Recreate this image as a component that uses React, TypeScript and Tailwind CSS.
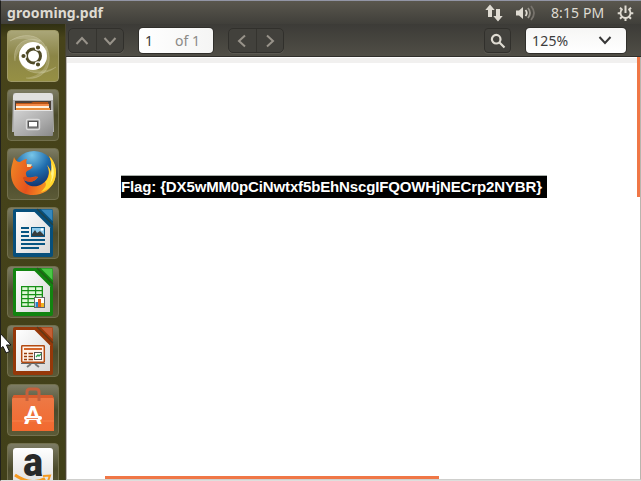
import type { ReactNode } from "react";

const UI = "font-['Noto_Sans','Open_Sans',sans-serif]";

function Tile({ children, active = false }: { children: ReactNode; active?: boolean }) {
  return (
    <div
      className={`h-[52px] w-[52px] shrink-0 overflow-hidden rounded-[4px] border ${
        active
          ? "border-[#a09b68] bg-linear-to-b from-[#aaa678] via-[#8b8546] to-[#969044]"
          : "border-[#72704e] bg-linear-to-b from-[#7d7c64] via-[#4b4a2b] to-[#5b5a37]"
      }`}
    >
      <svg viewBox="0 0 52 52" className="-m-px block h-[52px] w-[52px]">
        {children}
      </svg>
    </div>
  );
}

function Ubuntu() {
  return (
    <Tile active>
      <g fill="#e2e0c4" fillOpacity=".25">
        <path d="M3 11C18 1 37 5 40 22L36 18C31 8 15 7 3 11Z" />
        <path d="M8 31C5 15 18 5 34 11L30 14C19 9 12 17 8 31Z" />
        <path d="M19 48C37 51 48 34 39 16L37 22C44 35 34 46 19 48Z" />
        <path d="M49 37C33 49 13 42 12 26L15 29C20 40 34 44 49 37Z" />
      </g>
      <g fill="none" stroke="#e0dec0" strokeOpacity=".3">
        <path d="M3 11C18 1 37 5 40 22M8 31C5 15 18 5 34 11M19 48C37 51 48 34 39 16M49 37C33 49 13 42 12 26" />
      </g>
      <circle cx="26" cy="26" r="14" fill="#fff" />
      <circle cx="26.5" cy="26" r="7" fill="none" stroke="#4f4a27" strokeWidth="3" />
      <g fill="#4f4a27" stroke="#fff" strokeWidth="1.2">
        <circle cx="16.5" cy="26" r="2.7" />
        <circle cx="31" cy="17.5" r="2.7" />
        <circle cx="31" cy="34.5" r="2.7" />
      </g>
    </Tile>
  );
}

function Files() {
  return (
    <Tile>
      <defs>
        <linearGradient id="cab" x2="1" y2="1">
          <stop stopColor="#d2d2d2" /><stop offset=".6" stopColor="#aaa" /><stop offset="1" stopColor="#898989" />
        </linearGradient>
      </defs>
      <path d="M6 6Q6 4 8 4H44Q46 4 46 6L47 43H5Z" fill="#b2b2b2" />
      <path d="M6 7Q7 4 9 4H43Q45 4 46 7V11H6Z" fill="#e0e0e0" />
      <path d="M8 12H44V23H8Z" fill="#4b4038" />
      <path d="M9 14H24L26 13H41L42 16V23H9Z" fill="#b75416" />
      <path d="M9 15H42V17H9Z" fill="#f48a48" />
      <path d="M9 17H42V19H9Z" fill="#fff0dc" />
      <path d="M9 19H43V22H9Z" fill="#ea8b35" />
      <rect x="7" y="21" width="39" height="26" rx="1" fill="url(#cab)" />
      <path d="M7 21.5H45.5" stroke="#e5e5e5" />
      <rect x="19.5" y="30.5" width="13" height="10" rx="1.5" fill="#8a8a8a" stroke="#dcdcdc" strokeWidth="1.4" />
      <rect x="21.5" y="32.5" width="9" height="5.5" fill="#fff" stroke="#555" />
    </Tile>
  );
}

function Firefox() {
  return (
    <Tile>
      <defs>
        <radialGradient id="globe" cx=".45" cy=".1" r=".8">
          <stop stopColor="#78c6e8" /><stop offset=".5" stopColor="#1f6cad" /><stop offset="1" stopColor="#112e66" />
        </radialGradient>
        <linearGradient id="fox" x1="0" y1="0" x2="1" y2=".3">
          <stop stopColor="#f08a25" /><stop offset=".55" stopColor="#e5531d" /><stop offset="1" stopColor="#f9a024" />
        </linearGradient>
      </defs>
      <circle cx="27" cy="24" r="21" fill="url(#globe)" />
      <path d="M7 9C8 12 10 14 13 14C16 12 18 11 20 11C19 13 19 15 20 17L26 18.5C25 21 22 22 20 23C18 25 19 27 20 29C24 31 27 27 31 29C28 34 22 35 17 32C20 39 29 40 35 36C43 31 43 22 40 17C43 20 44 24 44 26C45 21 45 14 42 8C48 14 50 22 48 31C44 42 36 47 26 47C12 47 4 37 4 25C4 18 6 15 7 9Z" fill="url(#fox)" />
      <path d="M42 8C50 15 51 27 46 36C42 41 38 43 34 44C39 39 40 36 38 34C43 30 43 22 40 17C43 20 44 24 44 26C45 20 45 13 42 8Z" fill="#ffd62c" />
      <path d="M44 14C48 22 48 28 43 36C45 30 45 28 44 26C45 21 45 17 44 14Z" fill="#fff38a" />
      <path d="M20 16L25 16.5 23.5 19 20 19Z" fill="#ffe2a8" />
      <path d="M17 32C22 35 28 34 31 29C28 28 24 31 20 29C16 28 15 30 17 32Z" fill="#d34b1b" />
    </Tile>
  );
}

function Doc({ color, light, id, children }: { color: string; light: string; id: string; children: ReactNode }) {
  return (
    <Tile>
      <defs>
        <linearGradient id={id} x2="1" y2="1">
          <stop stopColor="#fff" /><stop offset="1" stopColor="#d8d8d8" />
        </linearGradient>
      </defs>
      <path d="M8 2H44Q46 2 46 4V48Q46 50 44 50H8Q6 50 6 48V4Q6 2 8 2Z" fill={color} />
      <path d="M30 2L46 18" stroke="#343820" strokeOpacity=".55" strokeWidth="1.2" />
      <path d="M34 2.5H44.5L45.5 3.5V14Z" fill={light} />
      <path d="M9 5H27.5L43 20.5V46H9Z" fill={`url(#${id})`} />
      {children}
    </Tile>
  );
}

function Writer() {
  return (
    <Doc color="#074f7b" light="#3688bd" id="writerPage">
      <path d="M14 21H22M14 25H22M14 29H22M14 33H38M14 37H38M14 41H32" stroke="#075582" strokeWidth="1.8" />
      <rect x="24.5" y="20.5" width="13" height="9" fill="#91ccec" stroke="#075582" />
      <path d="M25 29V27L28 23 30 26 33 24 37 28V29Z" fill="#383d3d" />
      <circle cx="35" cy="22.5" r="1.3" fill="#fff" />
    </Doc>
  );
}

function Calc() {
  return (
    <Doc color="#128410" light="#4bc746" id="calcPage">
      <rect x="14" y="20" width="22" height="21" fill="#169016" />
      <path d="M15.2 21.2h5.3v2.8h-5.3zM21.7 21.2h6.3v2.8h-6.3zM29.2 21.2h5.5v2.8h-5.5zM15.2 25.2h5.3v2.8h-5.3zM21.7 25.2h6.3v2.8h-6.3zM29.2 25.2h5.5v2.8h-5.5zM15.2 29.2h5.3v2.8h-5.3zM21.7 29.2h6.3v2.8h-6.3zM29.2 29.2h5.5v2.8h-5.5zM15.2 33.2h5.3v2.8h-5.3zM21.7 33.2h6.3v2.8h-6.3zM15.2 37.2h5.3v2.5h-5.3zM21.7 37.2h6.3v2.5h-6.3z" fill="#dff8d8" />
      <rect x="27.5" y="31.5" width="10" height="10" fill="#fff" stroke="#666" />
      <path d="M28.5 36h2.5v5h-2.5z" fill="#2784c7" />
      <path d="M31 33h3v8h-3z" fill="#e45d18" />
      <path d="M34 37h3v4h-3z" fill="#f1b522" />
    </Doc>
  );
}

function Impress() {
  return (
    <Doc color="#953809" light="#c45f35" id="impressPage">
      <rect x="14.7" y="20.7" width="22.6" height="16.6" rx=".7" fill="#fff3e9" stroke="#b34a12" strokeWidth="1.5" />
      <path d="M17 24H35" stroke="#d56428" strokeWidth="2" />
      <path d="M17 28.5H20M21.5 28.5H26M17 31.5H20M21.5 31.5H26M17 34.5H20M21.5 34.5H26" stroke="#963b0a" strokeWidth="1.5" />
      <rect x="27.5" y="27.5" width="7" height="7" fill="#fff" stroke="#555" />
      <path d="M29 32L31 30 32 31 34 29" stroke="#2da34c" strokeWidth="1.3" fill="none" />
      <path d="M14 38.5H38" stroke="#666" />
      <path d="M24 39L20 42M28 39L32 42" stroke="#777" strokeWidth="2" />
    </Doc>
  );
}

function Software() {
  return (
    <Tile>
      <defs>
        <linearGradient id="bag" x2="0" y2="1"><stop stopColor="#ec7a47" /><stop offset="1" stopColor="#f2692f" /></linearGradient>
      </defs>
      <path d="M7 11H45L47 15V47H5V15Z" fill="url(#bag)" />
      <path d="M5 14L7 11H45L47 14Z" fill="#d95c2c" />
      <path d="M20 17V8Q20 5 23 5H29Q32 5 32 8V17" fill="none" stroke="#c4603c" strokeWidth="3" />
      <path d="M5 37H47" stroke="#ff9a6b" strokeOpacity=".4" />
      <text x="26" y="39.5" textAnchor="middle" fill="#fff" fontFamily="Lato,sans-serif" fontSize="24" fontWeight="900">A</text>
      <rect x="17" y="32" width="18" height="4" rx="2" fill="#fff" />
      <path d="M19.5 34.5H31" stroke="#f08a60" strokeWidth="1" />
    </Tile>
  );
}

function Amazon() {
  return (
    <Tile>
      <defs>
        <linearGradient id="store" x2="0" y2="1"><stop stopColor="#fff" /><stop offset="1" stopColor="#d8d8d8" /></linearGradient>
      </defs>
      <rect x="6" y="5" width="40" height="44" rx="3" fill="url(#store)" />
      <text x="28" y="33" textAnchor="middle" transform="scale(.93 1)" fill="#292929" fontFamily="Roboto,sans-serif" fontSize="40" fontWeight="900">a</text>
      <path d="M8 32Q24 43 38 35.5" fill="none" stroke="#f59a21" strokeWidth="3" />
      <path d="M36 33L43 32.5 41 38" fill="none" stroke="#f59a21" strokeWidth="2" />
    </Tile>
  );
}

function Chevron({ d }: { d: string }) {
  return (
    <span className="flex flex-1 items-center justify-center">
      <svg width="14" height="14" viewBox="0 0 14 14" fill="none" stroke="#98938a" strokeWidth="2"><path d={d} /></svg>
    </span>
  );
}

function ButtonPair({ first, second }: { first: string; second: string }) {
  return (
    <div className="flex h-[25px] w-[56px] divide-x divide-[#35342f] rounded-[5px] border border-[#31302c] bg-[#42413c] shadow-[0_1px_0_#5b5952]">
      <Chevron d={first} />
      <Chevron d={second} />
    </div>
  );
}

function StatusIcons() {
  return (
    <>
      <svg className="ml-auto mr-[13px]" width="18" height="18" viewBox="0 0 18 18" fill="#dfdbd2">
        <path d="M5 .5L9.7 6H7V13H3V6H.3ZM13 17.5L8.3 12H11V5H15V12H17.7Z" />
      </svg>
      <svg className="mr-[15px]" width="20" height="18" viewBox="0 0 20 18" fill="none">
        <path d="M0 6.5H3L7 3V15L3 11.5H0Z" fill="#dfdbd2" />
        <path d="M9.5 6Q12 9 9.5 12" stroke="#dfdbd2" strokeWidth="1.8" />
        <path d="M12 4Q16 9 12 14" stroke="#99958c" strokeWidth="1.8" />
        <path d="M15 2Q21 9 15 16" stroke="#77736c" strokeWidth="1.8" />
      </svg>
      <span className="w-[54px] whitespace-nowrap text-[14px] tracking-[0.1px] text-[#dfdbd2]">8:15 PM</span>
      <svg className="ml-[12px] mr-[7px]" width="17" height="18" viewBox="0 0 17 18" fill="none" stroke="#dfdbd2">
        <path d="M5.5 5A5 5 0 1 0 11.5 5" strokeWidth="1.8" />
        <path d="M8.5 1.5V9" strokeWidth="2" />
        <path d="M8.5 14V17M.7 9.2H3.7M13.3 9.2H16.3M3 14.7L5 12.7M14 14.7L12 12.7M3 3.7L4.7 5.4M14 3.7L12.3 5.4" strokeWidth="2" />
      </svg>
    </>
  );
}

export default function App() {
  return (
    <div className={`relative flex h-[481px] w-[641px] flex-col overflow-hidden border-b border-l border-t border-b-[#dededc] border-l-[#20201d] border-t-[#9295a5] bg-white ${UI}`}>
      <header className="flex h-[23px] shrink-0 items-center bg-linear-to-b from-[#5a574e] to-[#403f3a] pl-[6px]">
        <h1 className="whitespace-nowrap text-[14px] leading-[22px] font-bold tracking-[0.08px] text-[#dfdbd2]">grooming.pdf</h1>
        <StatusIcons />
      </header>
      <div className="flex min-h-0 flex-1">
        <nav className="flex w-[65px] shrink-0 flex-col items-center gap-[7px] overflow-hidden border-r border-[#4a4530] bg-linear-to-b from-[#303012] via-[#47431a] via-[3%] to-[#414019] pt-[6px]">
          <Ubuntu />
          <Files />
          <Firefox />
          <Writer />
          <Calc />
          <Impress />
          <Software />
          <Amazon />
        </nav>
        <div className="flex min-w-0 flex-1 flex-col">
          <div className="flex h-[33px] shrink-0 items-start border-b border-[#302f2b] bg-linear-to-b from-[#3c3b37] to-[#504e46] pl-[2px] pt-[4px]">
            <ButtonPair first="M1.5 10L7 4L12.5 10" second="M1.5 4L7 10L12.5 4" />
            <div className="ml-[15px] flex h-[25px] w-[74px] items-center rounded-[4px] bg-linear-to-r from-white to-[#f5f5f4] pl-[6px] text-[14px] shadow-[0_0_0_1px_#302f2b]">
              <span className="w-[30px] text-[#3c3c3c]">1</span>
              <span className="whitespace-nowrap text-[#8b8a87]">of 1</span>
            </div>
            <div className="ml-[15px]"><ButtonPair first="M10 1.5L4 7L10 12.5" second="M4 1.5L10 7L4 12.5" /></div>
            <div className="ml-auto flex h-[25px] w-[27px] items-center justify-center rounded-[4px] border border-[#31302c] bg-[#43423d] shadow-[0_1px_0_#5b5952]">
              <svg width="16" height="16" viewBox="0 0 16 16" fill="none" stroke="#dfdbd2" strokeWidth="2.2"><circle cx="6.2" cy="6.2" r="4.3" /><path d="M9.5 9.5L14.5 14.5" /></svg>
            </div>
            <div className="ml-[15px] mr-[15px] flex h-[25px] w-[100px] items-center rounded-[4px] bg-linear-to-b from-[#f6f6f5] to-white pl-[6px] pr-[14px] text-[14px] text-[#3c3c3c] shadow-[0_0_0_1px_#302f2b]">
              <span className="tracking-[0.2px]">125%</span>
              <svg className="ml-auto" width="14" height="14" viewBox="0 0 14 14" fill="none" stroke="#373737" strokeWidth="2"><path d="M1.5 3L7 9L12.5 3" /></svg>
            </div>
          </div>
          <main className="relative flex-1 border-b border-l border-r border-b-[#cfcfcd] border-l-[#bdb8b2] border-r-[#b9b5af] bg-white">
            <div className="h-[6px] border-t border-white bg-[#f1f0ef]" />
            <p className="ml-[54px] mt-[112px] h-[23px] w-[426px] whitespace-nowrap border-t border-[#a9b0aa] bg-black font-['Liberation_Sans',Arial,sans-serif] text-[15px] leading-[22px] font-bold tracking-[-0.14px] text-white">
              Flag: {"{DX5wMM0pCiNwtxf5bEhNscgIFQOWHjNECrp2NYBR}"}
            </p>
            <div className="absolute right-0 top-0 h-[140px] w-[3px] bg-[#f07746]" />
            <div className="absolute bottom-0 left-[38px] h-[3px] w-[334px] bg-[#f07746]" />
          </main>
        </div>
      </div>
      <svg className="absolute -left-px top-[331px]" width="13" height="23" viewBox="0 0 13 23">
        <path d="M0 1L11 13H6.5L9.5 19.5L6 21L3 14.5L0 17Z" fill="#fff" stroke="#111" />
      </svg>
    </div>
  );
}
